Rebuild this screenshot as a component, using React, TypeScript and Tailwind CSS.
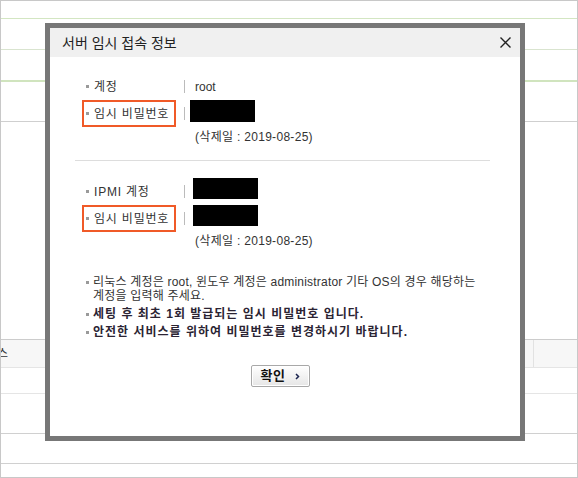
import React from "react";

const font = { fontFamily: '"Liberation Sans", "Noto Sans CJK KR", sans-serif' };

function Bullet() {
  return <span className="block w-[3px] h-[3px] bg-[#9a9a9a] shrink-0" />;
}

function NoteBullet() {
  return (
    <span className="h-[14px] flex items-center shrink-0">
      <Bullet />
    </span>
  );
}

function Row({
  label,
  highlight,
  children,
}: {
  label: string;
  highlight?: boolean;
  children: React.ReactNode;
}) {
  return (
    <div className="flex h-[27px] pl-[32px]">
      <div
        className={
          "w-[94px] h-[27px] flex items-center pl-[2px] gap-[5px] border-2 " +
          (highlight ? "border-[#f05a28]" : "border-transparent")
        }
      >
        <Bullet />
        <span className="text-[12px] text-[#333] leading-[14px] tracking-[0.8px] whitespace-nowrap">
          {label}
        </span>
      </div>
      <div className="flex items-center h-[27px] ml-[8px]">
        <span className="w-px h-[13px] bg-[#bbbbbb]" />
      </div>
      {children}
    </div>
  );
}

export default function App() {
  return (
    <div
      className="relative w-[578px] h-[478px] bg-white border border-[#c8c8c8] overflow-hidden"
      style={font}
    >
      {/* background page */}
      <div className="flex flex-col">
        <div className="h-[17px]" />
        <div className="h-px bg-[#d3e6c2]" />
        <div className="h-[30px]" />
        <div className="h-px bg-[#d9e4cf]" />
        <div className="h-[30px]" />
        <div className="h-[2px] bg-[#d0e4be]" />
        <div className="h-[39px]" />
        <div className="h-px bg-[#cfcfcf]" />
        <div className="h-[217px]" />
        <div className="h-px bg-[#cccccc]" />
        <div className="h-[27px] bg-[#f7f7f7] flex">
          <div className="w-[7px] overflow-hidden flex justify-end items-center">
            <span className="text-[12px] text-[#333] whitespace-nowrap">스</span>
          </div>
          <div className="flex-1" />
          <div className="w-px bg-[#e2e2e2]" />
          <div className="w-[43px]" />
        </div>
        <div className="h-px bg-[#e5e5e5]" />
        <div className="h-[25px]" />
        <div className="h-px bg-[#e5e5e5]" />
        <div className="h-[39px]" />
        <div className="h-px bg-[#d0d0d0]" />
        <div className="h-[29px]" />
        <div className="h-px bg-[#d0d0d0]" />
        <div className="h-[13px]" />
      </div>

      {/* dialog */}
      <div className="absolute left-[44px] top-[22px] w-[480px] h-[418px] border-[5px] border-[#777777] bg-white flex flex-col">
        <div className="h-[29px] bg-[#f0f0f0] flex items-center justify-between pl-[12px] pr-[9px]">
          <span className="text-[14px] text-[#222] leading-[16px]">서버 임시 접속 정보</span>
          <svg width="11" height="11" viewBox="0 0 11 11">
            <path d="M0.5 0.5 L10.5 10.5 M10.5 0.5 L0.5 10.5" stroke="#222" strokeWidth="1.4" />
          </svg>
        </div>

        <div className="pt-[16px] flex flex-col">
          <Row label="계정">
            <div className="flex items-center ml-[10px] text-[12px] text-[#333]">root</div>
          </Row>
          <Row label="임시 비밀번호" highlight>
            <div className="ml-[5px] w-[65px] h-[22px] bg-black" />
          </Row>
          <div className="mt-[2px] h-[16px] flex items-center pl-[145px] text-[12px] text-[#333] tracking-[0.3px]">
            (삭제일 : 2019-08-25)
          </div>

          <div className="mt-[15px] ml-[25px] mr-[30px] h-px bg-[#dddddd]" />

          <div className="mt-[17px]">
            <Row label="IPMI 계정">
              <div className="ml-[8px] w-[65px] h-[21px] bg-black" />
            </Row>
            <Row label="임시 비밀번호" highlight>
              <div className="ml-[8px] w-[65px] h-[21px] bg-black" />
            </Row>
          </div>
          <div className="mt-[1px] h-[16px] flex items-center pl-[145px] text-[12px] text-[#333] tracking-[0.3px]">
            (삭제일 : 2019-08-25)
          </div>

          <ul className="mt-[26px] pl-[36px] pr-[4px] text-[12px] text-[#333]">
            <li className="flex gap-[4px] leading-[14px] tracking-[0.2px]">
              <NoteBullet />
              <span>
                리눅스 계정은 root, 윈도우 계정은 administrator 기타 OS의 경우 해당하는
                <br />
                계정을 입력해 주세요.
              </span>
            </li>
            <li className="flex gap-[4px] leading-[14px] mt-[4px] font-bold text-[#2b2433] tracking-[1px]">
              <NoteBullet />
              <span className="whitespace-nowrap">세팅 후 최초 1회 발급되는 임시 비밀번호 입니다.</span>
            </li>
            <li className="flex gap-[4px] leading-[14px] mt-[4px] font-bold text-[#2b2433] tracking-[1px]">
              <NoteBullet />
              <span className="whitespace-nowrap">안전한 서비스를 위하여 비밀번호를 변경하시기 바랍니다.</span>
            </li>
          </ul>

          <div className="mt-[26px] pl-[201px]">
            <button className="w-[59px] h-[22px] border border-[#a8a8a8] rounded-[2px] bg-gradient-to-b from-white to-[#e6e6e6] flex items-center justify-center gap-[10px] shadow-[inset_0_0_0_1px_#ffffff]">
              <span className="text-[13px] font-bold text-[#111] leading-[14px] tracking-[0.5px]">확인</span>
              <svg width="5" height="7" viewBox="0 0 5 7">
                <path d="M1 1 L3.5 3.5 L1 6" stroke="#1c2550" strokeWidth="1.5" fill="none" />
              </svg>
            </button>
          </div>
        </div>
      </div>
    </div>
  );
}
